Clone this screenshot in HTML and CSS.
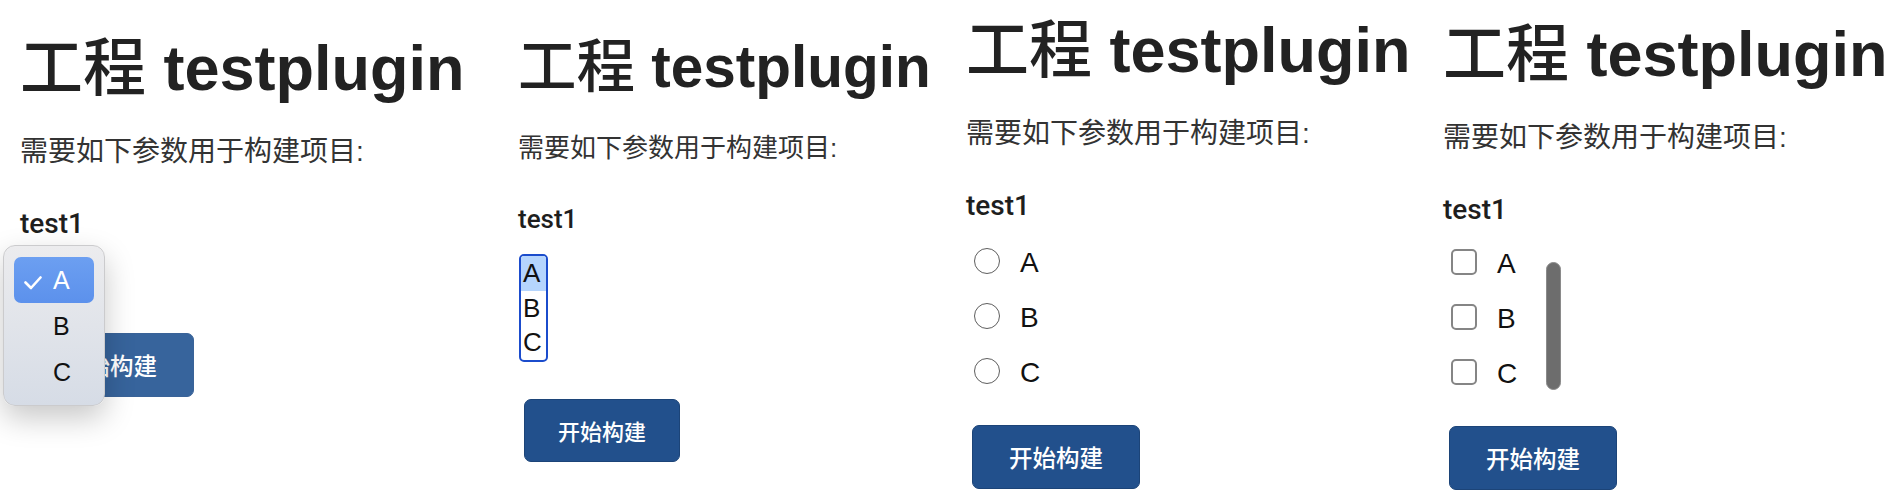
FILE: index.html
```html
<!DOCTYPE html>
<html lang="zh-CN">
<head>
  <meta charset="UTF-8" />
  <title>工程 testplugin - 参数输入</title>
  <link rel="stylesheet" href="styles.css">
</head>
<body>
  <div class="panels">
    <!-- Select, popup open -->
    <section class="panel panel-popup">
      <h1><span class="cjk">工程</span> testplugin</h1>
      <p class="lead">需要如下参数用于构建项目:</p>
      <label class="field-label">test1</label>
      <div class="select-wrap">
        <ul class="popup">
          <li class="popup-item active">
            <svg class="check" viewBox="0 0 18 14" width="18" height="14"><polyline points="1.5,6.5 7,12 16.5,1.5" /></svg>
            <span>A</span>
          </li>
          <li class="popup-item"><span>B</span></li>
          <li class="popup-item"><span>C</span></li>
        </ul>
      </div>
      <button class="btn btn-dim">开始构建</button>
    </section>

    <!-- Multi select listbox -->
    <section class="panel panel-list">
      <h1><span class="cjk">工程</span> testplugin</h1>
      <p class="lead">需要如下参数用于构建项目:</p>
      <label class="field-label">test1</label>
      <ul class="listbox">
        <li class="selected">A</li>
        <li>B</li>
        <li>C</li>
      </ul>
      <button class="btn">开始构建</button>
    </section>

    <!-- Radio group -->
    <section class="panel panel-radio">
      <h1><span class="cjk">工程</span> testplugin</h1>
      <p class="lead">需要如下参数用于构建项目:</p>
      <label class="field-label">test1</label>
      <div class="options">
        <div class="option"><span class="radio"></span><span>A</span></div>
        <div class="option"><span class="radio"></span><span>B</span></div>
        <div class="option"><span class="radio"></span><span>C</span></div>
      </div>
      <button class="btn">开始构建</button>
    </section>

    <!-- Checkbox group with scrollbar -->
    <section class="panel panel-check">
      <h1><span class="cjk">工程</span> testplugin</h1>
      <p class="lead">需要如下参数用于构建项目:</p>
      <label class="field-label">test1</label>
      <div class="checks">
        <div class="options">
          <div class="option"><span class="checkbox"></span><span>A</span></div>
          <div class="option"><span class="checkbox"></span><span>B</span></div>
          <div class="option"><span class="checkbox"></span><span>C</span></div>
        </div>
        <div class="scroll-thumb"></div>
      </div>
      <button class="btn">开始构建</button>
    </section>
  </div>
</body>
</html>
```

FILE: styles.css
```css
* {
  box-sizing: border-box;
}
body {
  margin: 0;
  background: #fff;
  font-family: "Liberation Sans", "Noto Sans CJK SC", sans-serif;
  color: #333;
  overflow: hidden;
}
.panels {
  display: flex;
  height: 498px;
}
.panel {
  font-size: 28px;
  line-height: 1.5;
  flex: none;
}
.panel-popup { width: 478px; padding: 34px 0 0 20px; }
.panel-list  { width: 472px; padding: 35px 0 0 40px; font-size: 26px; }
.panel-radio { width: 474px; padding: 16px 0 0 16px; }
.panel-check { width: 476px; padding: 20px 0 0 19px; }

h1 {
  font-size: 2.25em;
  line-height: 1.1;
  font-weight: bold;
  color: #222;
  margin: 0 0 28px;
  white-space: nowrap;
}
h1 .cjk {
  font-weight: 500;
}
.lead {
  margin: 0 0 30px;
}
.panel-popup .lead {
  margin-top: 2px;
}
.field-label {
  display: block;
  font-family: Roboto, "Liberation Sans", sans-serif;
  font-weight: 500;
  color: #1e1e1e;
}

/* buttons */
.btn {
  display: block;
  margin: 30px 0 0 6px;
  width: 168px;
  height: 64px;
  padding: 0;
  border: 1px solid #1c4478;
  border-radius: 7px;
  background: #22508c;
  color: #fff;
  font-family: inherit;
  font-size: 23.5px;
  font-weight: 500;
}
.btn-dim {
  background: #37649c;
  border-color: #3a6398;
}

/* popup select */
.select-wrap {
  position: relative;
  height: 58px;
}
.popup {
  position: absolute;
  top: 0;
  left: -17px;
  width: 102px;
  margin: 0;
  padding: 11px 10px 10px;
  list-style: none;
  border: 1px solid #cbcbcd;
  border-radius: 12px;
  background: linear-gradient(#ececee, #d6dce6);
  box-shadow: 0 12px 30px rgba(0,0,0,0.22);
  z-index: 2;
}
.popup-item {
  display: flex;
  align-items: center;
  height: 46px;
  padding-left: 39px;
  border-radius: 7px;
  font-size: 25px;
  color: #111;
}
.popup-item.active {
  padding-left: 10px;
  background: linear-gradient(#6c9ff1, #5c91ec);
  color: #fff;
}
.check {
  margin: 6px 11px 0 0;
  fill: none;
  stroke: #fff;
  stroke-width: 2.6;
  stroke-linecap: round;
  stroke-linejoin: round;
}

/* listbox */
.listbox {
  margin: 15px 0 0 1px;
  padding: 0;
  list-style: none;
  width: 29px;
  border: 2px solid #1b4ccc;
  border-radius: 5px;
  overflow: hidden;
  font-size: 26px;
  color: #111;
}
.listbox li {
  height: 34.5px;
  line-height: 34.5px;
  padding-left: 2px;
}
.listbox li.selected {
  background: #b5d5fd;
}
.panel-list .lead { margin-bottom: 32px; }
.panel-list h1 { margin-bottom: 30px; }
.panel-list .btn {
  margin-top: 37px;
  width: 156px;
  height: 63px;
  font-size: 22px;
}

/* radio / checkbox */
.options {
  padding: 3px 0 0 8px;
}
.panel-radio .options {
  padding-top: 6px;
}
.option {
  display: flex;
  align-items: center;
  gap: 20px;
  height: 55px;
  color: #111;
}
.option span:last-child {
  padding-top: 5px;
}
.radio {
  width: 26px;
  height: 26px;
  border: 1.5px solid #5e5e5e;
  border-radius: 50%;
}
.checkbox {
  width: 26px;
  height: 26px;
  border: 2px solid #858585;
  border-radius: 5px;
}
.checks {
  display: flex;
}
.checks .options {
  width: 103px;
}
.scroll-thumb {
  width: 15px;
  height: 128px;
  margin-top: 31px;
  border-radius: 8px;
  background: #6d6d6d;
  border: 1px solid #8a8a8a;
}
.panel-radio .btn,
.panel-check .btn {
  margin-top: 27px;
}
```
